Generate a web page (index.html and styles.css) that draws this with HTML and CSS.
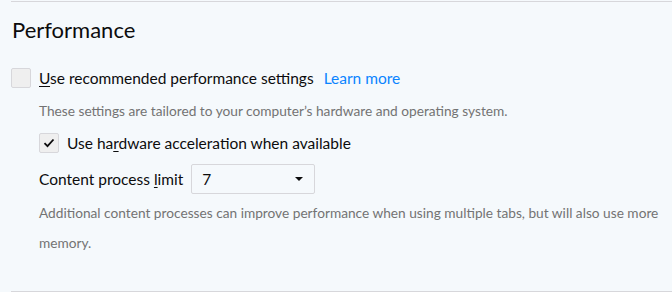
FILE: index.html
```html
<!DOCTYPE html>
<html lang="en">
<head>
  <meta charset="UTF-8" />
  <title>Performance</title>
  <link rel="stylesheet" href="styles.css">
</head>
<body>
  <section class="group">
    <h1>Performance</h1>

    <label class="check-row">
      <span class="checkbox"></span>
      <span><u>U</u>se recommended performance settings</span>
      <a class="learn-more" href="#">Learn more</a>
    </label>

    <div class="indent">
      <p class="hint">These settings are tailored to your computer’s hardware and operating system.</p>

      <label class="check-row">
        <span class="checkbox checked">
          <svg width="12" height="10" viewBox="0 0 12 10"><path d="M1.5 5.2 L4.5 8.2 L10.5 1.5" fill="none" stroke="#0c0c0d" stroke-width="1.8"/></svg>
        </span>
        <span>Use ha<u>r</u>dware acceleration when available</span>
      </label>

      <div class="select-row">
        <span>Content process <u>l</u>imit</span>
        <div class="select">
          <span>7</span>
          <svg width="8" height="4" viewBox="0 0 8 4"><path d="M0 0 H8 L4 4 Z" fill="#0c0c0d"/></svg>
        </div>
      </div>

      <p class="hint multi">Additional content processes can improve performance when using multiple tabs, but will also use more memory.</p>
    </div>
  </section>
</body>
</html>
```

FILE: styles.css
```css
body {
  margin: 0;
  padding: 1px 0 0 11px;
  background-color: #f5f9fc;
  font-family: Lato, "Liberation Sans", sans-serif;
  color: #0c0c0d;
}

.group {
  border-top: 1px solid #d7d7db;
  border-bottom: 1px solid #d7d7db;
  height: 291px;
  box-sizing: border-box;
}

h1 {
  font-size: 22px;
  font-weight: normal;
  margin: 13px 0 0 1px;
  line-height: 30px;
}

.check-row {
  display: flex;
  align-items: center;
  font-size: 15.5px;
  height: 20px;
}

.group > .check-row {
  margin-top: 23px;
}

.checkbox {
  width: 18px;
  height: 18px;
  border: 1px solid #d7d7db;
  border-radius: 2px;
  background-color: #efefef;
  margin-right: 8px;
  display: flex;
  align-items: center;
  justify-content: center;
  flex-shrink: 0;
}

u {
  text-decoration-thickness: 1px;
  text-underline-offset: 2px;
}

.learn-more {
  color: #0a84ff;
  text-decoration: none;
  margin-left: 10px;
}

.indent {
  margin-left: 28px;
  width: 625px;
}

.hint {
  font-size: 13.7px;
  color: #737373;
  margin: 0;
}

.indent > .hint:first-child {
  margin-top: 14px;
  line-height: 18px;
}

.indent > .check-row {
  margin-top: 13px;
}

.select-row {
  display: flex;
  align-items: center;
  font-size: 15.5px;
  margin-top: 11px;
}

.select {
  width: 124px;
  height: 30px;
  border: 1px solid #d7d7db;
  border-radius: 2px;
  margin-left: 8px;
  display: flex;
  align-items: center;
  justify-content: space-between;
  padding: 0 11px 0 10px;
  box-sizing: border-box;
}

.hint.multi {
  line-height: 30px;
  margin-top: 4px;
}
```
